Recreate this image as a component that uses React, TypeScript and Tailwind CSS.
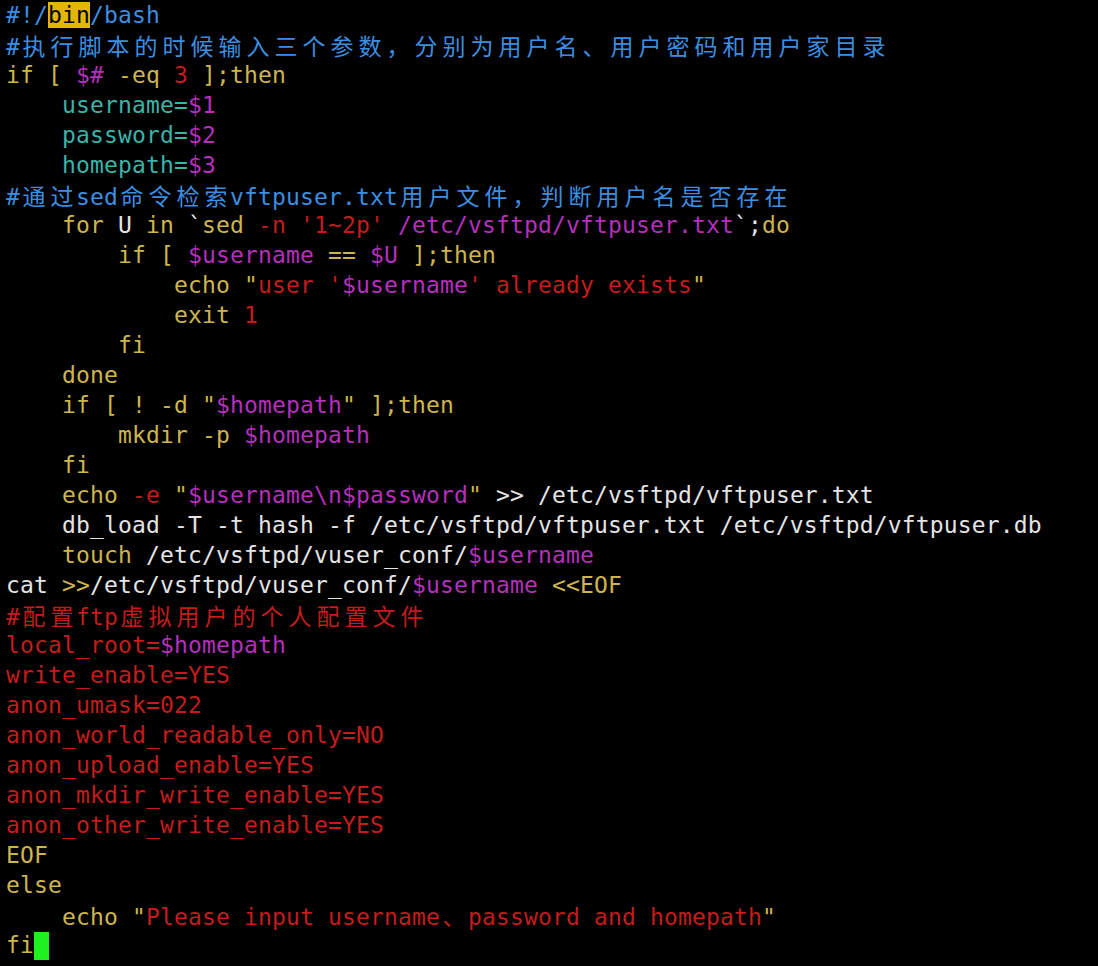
import type { ReactNode } from "react";

// vim-ish terminal palette
const W = "text-[#e4e4e4]";
const Y = "text-[#cdb54e]";
const B = "text-[#3c8ee0]";
const C = "text-[#3bb3a7]";
const M = "text-[#b52fbd]";
const R = "text-[#c41c1c]";
const HL = "bg-[#e3b505] text-black";

type Seg = [string, string];

const lines: Seg[][] = [
  [["#!/", B], ["bin", HL], ["/bash", B]],
  [["#执行脚本的时候输入三个参数，分别为用户名、用户密码和用户家目录", B]],
  [["if [ ", Y], ["$#", M], [" -eq ", Y], ["3", R], [" ];then", Y]],
  [["    username=", C], ["$1", M]],
  [["    password=", C], ["$2", M]],
  [["    homepath=", C], ["$3", M]],
  [["#通过sed命令检索vftpuser.txt用户文件，判断用户名是否存在", B]],
  [
    ["    for ", Y],
    ["U", W],
    [" in ", Y],
    ["`", W],
    ["sed ", Y],
    ["-n '1~2p' ", R],
    ["/etc/vsftpd/vftpuser.txt", M],
    ["`;", W],
    ["do", Y],
  ],
  [["        if [ ", Y], ["$username", M], [" == ", Y], ["$U", M], [" ];then", Y]],
  [
    ["            echo \"", Y],
    ["user '", R],
    ["$username", M],
    ["' already exists", R],
    ["\"", Y],
  ],
  [["            exit ", Y], ["1", R]],
  [["        fi", Y]],
  [["    done", Y]],
  [["    if [ ! -d \"", Y], ["$homepath", M], ["\" ];then", Y]],
  [["        mkdir -p ", Y], ["$homepath", M]],
  [["    fi", Y]],
  [
    ["    echo ", Y],
    ["-e ", R],
    ["\"", Y],
    ["$username\\n$password", M],
    ["\"", Y],
    [" >> /etc/vsftpd/vftpuser.txt", W],
  ],
  [["    db_load -T -t hash -f /etc/vsftpd/vftpuser.txt /etc/vsftpd/vftpuser.db", W]],
  [["    touch ", Y], ["/etc/vsftpd/vuser_conf/", W], ["$username", M]],
  [["cat ", W], [">>", Y], ["/etc/vsftpd/vuser_conf/", W], ["$username", M], [" <<EOF", Y]],
  [["#配置ftp虚拟用户的个人配置文件", R]],
  [["local_root=", R], ["$homepath", M]],
  [["write_enable=YES", R]],
  [["anon_umask=022", R]],
  [["anon_world_readable_only=NO", R]],
  [["anon_upload_enable=YES", R]],
  [["anon_mkdir_write_enable=YES", R]],
  [["anon_other_write_enable=YES", R]],
  [["EOF", Y]],
  [["else", Y]],
  [["    echo \"", Y], ["Please input username、password and homepath", R], ["\"", Y]],
  [["fi", Y]],
];

const WIDE = /[\u3000-\u303f\u4e00-\u9fff\uff00-\uffef]/;

// wide chars take two terminal cells
function cells(text: string) {
  const out: ReactNode[] = [];
  let buf = "";
  Array.from(text).forEach((ch, i) => {
    if (WIDE.test(ch)) {
      if (buf) {
        out.push(buf);
        buf = "";
      }
      out.push(
        <span
          key={i}
          className="inline-block w-[28px] text-center font-['Noto_Sans_CJK_SC',sans-serif] tracking-normal"
        >
          {ch}
        </span>,
      );
    } else {
      buf += ch;
    }
  });
  if (buf) out.push(buf);
  return out;
}

export default function App() {
  return (
    <div className="min-h-[966px] w-full overflow-hidden bg-black pl-[6px] font-['DejaVu_Sans_Mono',monospace] text-[23px] leading-[30px] tracking-[0.15px]">
      {lines.map((segs, i) => (
        <div key={i} className="h-[30px] whitespace-pre">
          {segs.map(([text, cls], j) => (
            <span key={j} className={cls}>
              {cells(text)}
            </span>
          ))}
          {i === lines.length - 1 ? (
            <span className="inline-block h-[28px] w-[15px] translate-y-[2px] bg-[#1ff01f] align-top" />
          ) : null}
        </div>
      ))}
    </div>
  );
}
